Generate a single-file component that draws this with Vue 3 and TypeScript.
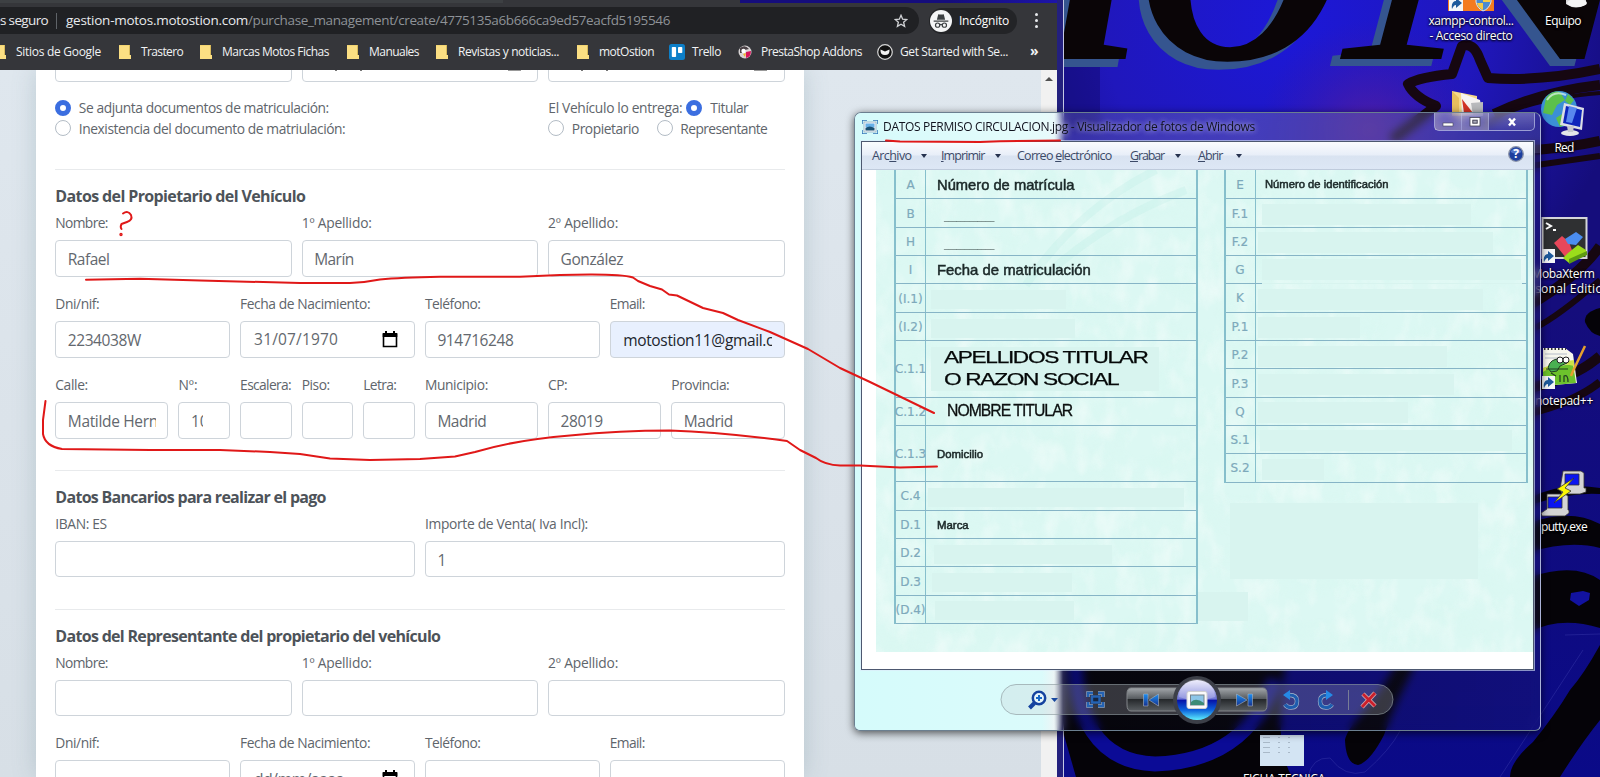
<script setup lang="ts">
interface Field { label: string; lw: number; span: number; value?: string; vw?: number; kind?: 'date' | 'auto' }
interface DocRow { code: string; h: number; text?: string; tw?: number; cls?: string; blob?: [number, number] }

/* Adjusts tracking (or horizontal scale with .scale) so a label takes the given width. */
const vFit = {
  mounted(el: HTMLElement, binding: { value?: number; modifiers: Record<string, boolean> }) {
    if (!binding.value) return
    const width = el.offsetWidth
    const count = (el.textContent || '').trim().length
    if (!width || !count) return
    if (binding.modifiers.scale) el.style.transform = `scaleX(${binding.value / width})`
    else el.style.letterSpacing = `${(binding.value - el.getBoundingClientRect().width) / count}px`
  },
}

const bookmarks = [
  { text: 'Sitios de Google', w: 85, icon: 'folder' },
  { text: 'Trastero', w: 42, icon: 'folder' },
  { text: 'Marcas Motos Fichas', w: 107, icon: 'folder' },
  { text: 'Manuales', w: 50, icon: 'folder' },
  { text: 'Revistas y noticias...', w: 101, icon: 'folder' },
  { text: 'motOstion', w: 55, icon: 'folder' },
  { text: 'Trello', w: 29, icon: 'trello' },
  { text: 'PrestaShop Addons', w: 101, icon: 'presta' },
  { text: 'Get Started with Se...', w: 108, icon: 'sendy' },
]

const names: Field[] = [
  { label: 'Nombre:', lw: 52.5, span: 4, value: 'Rafael', vw: 41.5 },
  { label: '1º Apellido:', lw: 70, span: 4, value: 'Marín', vw: 39.5 },
  { label: '2º Apellido:', lw: 70, span: 4, value: 'González', vw: 62.5 },
]
const contact: Field[] = [
  { label: 'Dni/nif:', lw: 44, span: 3, value: '2234038W', vw: 73 },
  { label: 'Fecha de Nacimiento:', lw: 130, span: 3, value: '31/07/1970', vw: 84, kind: 'date' },
  { label: 'Teléfono:', lw: 55.5, span: 3, value: '914716248', vw: 76 },
  { label: 'Email:', lw: 35, span: 3, value: 'motostion11@gmail.c', vw: 150, kind: 'auto' },
]
const address: Field[] = [
  { label: 'Calle:', lw: 32.5, span: 2, value: 'Matilde Hern', vw: 90 },
  { label: 'Nº:', lw: 19, span: 1, value: '10', vw: 17.5 },
  { label: 'Escalera:', lw: 51, span: 1 },
  { label: 'Piso:', lw: 28, span: 1 },
  { label: 'Letra:', lw: 33, span: 1 },
  { label: 'Municipio:', lw: 63, span: 2, value: 'Madrid', vw: 49 },
  { label: 'CP:', lw: 19, span: 2, value: '28019', vw: 42 },
  { label: 'Provincia:', lw: 58, span: 2, value: 'Madrid', vw: 49 },
]
const bank: Field[] = [
  { label: 'IBAN: ES', lw: 51.5, span: 6 },
  { label: 'Importe de Venta( Iva Incl):', lw: 163, span: 6, value: '1', vw: 8.5 },
]
const empty = (list: Field[]): Field[] =>
  list.map(f => ({ ...f, value: f.kind === 'date' ? 'dd/mm/aaaa' : undefined, vw: f.kind === 'date' ? 90 : undefined, kind: f.kind === 'date' ? 'date' : undefined }))

const sections = [
  { title: 'Datos del Propietario del Vehículo', w: 250, rows: [names, contact, address] },
  { title: 'Datos Bancarios para realizar el pago', w: 270.5, rows: [bank] },
  { title: 'Datos del Representante del propietario del vehículo', w: 385, rows: [empty(names), empty(contact)] },
]

const leftRows: DocRow[] = [
  { code: 'A', h: 29.3, text: 'Número de matrícula', tw: 137, cls: 'big' },
  { code: 'B', h: 28.4, text: '____________', tw: 50, cls: 'dash' },
  { code: 'H', h: 28.4, text: '____________', tw: 50, cls: 'dash' },
  { code: 'I', h: 28.2, text: 'Fecha de matriculación', tw: 154, cls: 'big' },
  { code: '(I.1)', h: 28.6, blob: [5, 135] },
  { code: '(I.2)', h: 28.2, blob: [5, 144] },
  { code: 'C.1.1', h: 56.3, blob: [5, 228], cls: 'owner' },
  { code: 'C.1.2', h: 28.3, text: 'NOMBRE TITULAR', tw: 125, cls: 'name' },
  { code: 'C.1.3', h: 56.1, text: 'Domicilio', tw: 46.5, cls: 'small' },
  { code: 'C.4', h: 28.9, blob: [2, 256] },
  { code: 'D.1', h: 28.3, text: 'Marca', tw: 31.5, cls: 'small marca' },
  { code: 'D.2', h: 28.3, blob: [8, 178] },
  { code: 'D.3', h: 28.5, blob: [6, 140] },
  { code: '(D.4)', h: 28, blob: [9, 139] },
]
const rightRows: DocRow[] = [
  { code: 'E', h: 29.2, text: 'Número de identificación', tw: 124, cls: 'ident' },
  { code: 'F.1', h: 28.3, blob: [6, 209] },
  { code: 'F.2', h: 28.3, blob: [2, 235] },
  { code: 'G', h: 28.3, blob: [6, 259], cls: 'broken' },
  { code: 'K', h: 28.3, blob: [2, 225] },
  { code: 'P.1', h: 28.3, blob: [2, 102] },
  { code: 'P.2', h: 28.5, blob: [2, 189] },
  { code: 'P.3', h: 28.3, blob: [2, 196] },
  { code: 'Q', h: 28.4, blob: [2, 150] },
  { code: 'S.1', h: 27.6, blob: [4, 252] },
  { code: 'S.2', h: 29, blob: [6, 62] },
]
const menu = [
  { pre: 'Arc', key: 'h', post: 'ivo', w: 39.5, arrow: true },
  { pre: '', key: 'I', post: 'mprimir', w: 43.5, arrow: true },
  { pre: 'Correo ', key: 'e', post: 'lectrónico', w: 94.5, arrow: false },
  { pre: '', key: 'G', post: 'rabar', w: 34, arrow: true },
  { pre: '', key: 'A', post: 'brir', w: 24.5, arrow: true },
]
</script>

<template>
  <div class="screen">
    <svg class="wallpaper" viewBox="0 0 1600 777" width="1600" height="777">
      <defs>
        <radialGradient id="glow" gradientUnits="userSpaceOnUse" cx="1290" cy="20" r="340">
          <stop offset="0" stop-color="#1c18d8" />
          <stop offset=".55" stop-color="#2017bc" />
          <stop offset="1" stop-color="#150d7c" />
        </radialGradient>
        <radialGradient id="purple" gradientUnits="userSpaceOnUse" cx="1370" cy="130" r="110">
          <stop offset="0" stop-color="#64209a" stop-opacity=".7" />
          <stop offset="1" stop-color="#40189a" stop-opacity="0" />
        </radialGradient>
        <linearGradient id="low" x1="0" y1="0" x2="0" y2="1">
          <stop offset="0" stop-color="#0a0a80" stop-opacity="0" />
          <stop offset="1" stop-color="#0a0a88" />
        </linearGradient>
      </defs>
      <rect width="1600" height="777" fill="url(#glow)" />
      <rect width="1600" height="300" fill="url(#purple)" />
      <rect x="1050" y="300" width="550" height="477" fill="url(#low)" />
      <rect x="1040" y="40" width="60" height="90" fill="#0d0650" opacity=".35" />
      <g class="letters">
        <g fill="#35558f">
          <text x="1030" y="67">I</text><text x="1128" y="67">O</text>
          <text transform="translate(1334 66) scale(1.5 1)">N</text>
        </g>
        <g fill="#0a0507">
          <text x="1038" y="59">I</text><text x="1137" y="59">O</text>
          <text transform="translate(1344 59) scale(1.5 1)">N</text>
        </g>
      </g>
      <g fill="none" stroke="#160711" stroke-width="10" stroke-linejoin="round">
        <path d="M1392 140 L1436 106 Q1414 97 1408 84 Q1420 77 1452 74 L1462 46 Q1474 42 1480 60 L1488 78 Q1540 82 1600 69" />
        <path d="M1494 114 Q1540 92 1600 85" />
        <path d="M1485 125 Q1520 100 1600 93" stroke-width="4" />
        <path d="M1500 152 Q1560 150 1600 141" />
        <path d="M1530 166 L1600 156" stroke-width="6" />
        <path d="M1530 305 Q1580 275 1600 246" />
        <path d="M1535 328 Q1560 315 1600 280" stroke-width="6" />
        <path d="M1530 388 Q1575 378 1600 356" />
        <path d="M1530 413 Q1575 402 1600 382" stroke-width="8" />
      </g>
      <g fill="#050308">
        <path d="M1600 308 Q1584 312 1585 322 Q1590 334 1600 336z" />
        <path d="M1530 498 Q1560 482 1600 488 V494 Q1570 492 1530 505z" />
        <path d="M1530 523 Q1570 508 1600 524 V548 Q1570 540 1530 552z" />
        <path d="M1530 577 Q1575 562 1600 580 V628 Q1560 616 1530 632z" />
        <path d="M1600 645 Q1584 674 1570 690 Q1555 715 1533 742 Q1510 762 1510 777 H1560 Q1580 745 1600 720z" />
        <path d="M1063 640 H1290 Q1270 740 1292 777 H1063z" />
        <path d="M1405 640 C1385 700 1352 715 1345 740 Q1346 764 1358 765 Q1370 762 1384 735 C1398 695 1415 670 1425 640z" />
      </g>
      <path d="M1583 591l7 2-1 7-10 6-9-6 1-7z" fill="#1212a0" />
      <path d="M1076 640 C1070 720 1100 762 1155 764 C1215 762 1255 735 1275 680" fill="none" stroke="#0b0b96" stroke-width="15" />
      <path d="M1064 735L1076 777H1064z" fill="#0d0d8c" />
      <path d="M1308 777 Q1312 757 1330 758 Q1345 778 1365 772 Q1390 750 1400 731 M1565 635 L1600 634 M1500 777 L1583 650" fill="none" stroke="#3535a8" opacity=".5" />
    </svg>

    <!-- desktop shortcuts -->
    <div class="desk">
      <svg class="ico" viewBox="0 0 160 777" width="160" height="777">
        <rect x="8" y="-20" width="46" height="31" fill="#f47b20" />
        <rect x="9" y="-6" width="14" height="17" fill="#f4f6f8" />
        <path d="M12 9c-1-5 1-8 4-8v-3l6 5-6 5V5c-2 0-3 2-4 4z" fill="#1d5a9c" />
        <path d="M36-4h15V2q-2 7-8 9-6-3-7-9z" fill="#4b8ad0" stroke="#dfe8ee" />
        <path d="M43-4h7V2h-7zM37 3h6v7q-5-2-6-7z" fill="#f5ca45" />
        <path d="M126-4h20v8q-10 7-20 0z" fill="#d9d9dc" /><ellipse cx="137" cy="3" rx="10" ry="4" fill="#f4f4f5" />
        <path d="M12 91l25 5v20H12z" fill="#f6d98a" /><path d="M12 91l7 7v18h-7z" fill="#e8bf5e" />
        <path d="M21 93l19 7 3 16H22z" fill="#f5f3f2" /><path d="M22 99l11 14h-9z" fill="#d33324" /><path d="M31 103l12-1v13H33z" fill="#b9babd" />
        <circle cx="119" cy="109" r="18" fill="#3b8fd6" />
        <path d="M106 98q6-8 14-6l5 8-8 5-5 10-9-2zM122 114l9 3-2 6-9 4-4-9zM128 94l6 6-4 5-5-4z" fill="#5cc04a" />
        <path d="M107 100q7-10 19-5" fill="none" stroke="#e2f6f0" stroke-width="2" opacity=".7" />
        <path d="M124 103l20 5-2 22-22-5z" fill="#dcdfe4" /><path d="M126 106l16 4-2 17-17-4z" fill="#0d24bb" /><path d="M129 106l8 2-5 15-6-1z" fill="#5887ee" />
        <ellipse cx="130" cy="133" rx="9" ry="3" fill="#e4e6e9" /><path d="M127 126h7l-1 6h-5z" fill="#c5c8cf" />
        <rect x="102.500" y="218" width="44" height="40" fill="#2f3032" stroke="#d5d6da" stroke-width="2" />
        <path d="M106 223l5 3-5 3M113 230h3" fill="none" stroke="#fff" stroke-width="2" />
        <path d="M114 243l8-7 7 6 4 11-6 6z" fill="#e8475a" /><path d="M125 239l11-7 7 5-7 8-8-1z" fill="#4b8df0" /><path d="M128 253l10-8 8 5 0 5-17 8-6-5z" fill="#9bdc1b" /><path d="M129 259l18-8v4l-18 9z" fill="#5d9a12" />
        <rect x="102" y="249" width="13" height="14" fill="#f4f6f8" /><path d="M104 262c-1-5 1-8 4-8v-3l6 5-6 5v-3c-2 0-3 2-4 4z" fill="#1d5a9c" />
        <path d="M103 348h22l8 6 4 29-34 3z" fill="#f7f7ee" /><path d="M103 368l30-4 3 19-33 3z" fill="#6cc22c" /><path d="M103 372q16-11 31-6v-6q-18 2-31 8z" fill="#cfe24a" />
        <path d="M104 349h22" stroke="#333" stroke-width="2" stroke-dasharray="1.500 2" /><path d="M105 354h22M105 358h24" stroke="#b5bcc9" />
        <path d="M108 368q2-10 13-9l6 4-7 3-3 5-6 1z" fill="#49b052" stroke="#213b22" />
        <path d="M106 369h22M111 373l5 3M120 375v7M124 382v-6q4-2 4 6" fill="none" stroke="#213b22" stroke-width="1.200" />
        <circle cx="120" cy="360" r="3" fill="#fff" stroke="#222" /><circle cx="126" cy="360" r="3" fill="#fff" stroke="#222" />
        <path d="M145 346l-12 25-2 5" stroke="#e5a02e" stroke-width="2.500" fill="none" />
        <rect x="102" y="376" width="13" height="13" fill="#f4f6f8" /><path d="M104 388c-1-5 1-8 4-8v-3l6 5-6 5v-3c-2 0-3 2-4 4z" fill="#1d5a9c" />
        <g stroke="#333" stroke-width=".8">
          <path d="M123 471h18l3 2v15h2v4l-6 2h-18l-2-5z" fill="#d4d4d4" /><path d="M125 474h14v11h-14z" fill="#0b15f0" />
          <path d="M107 494h18l3 2v14h1v3l-4 3h-23l-1-3 6-4z" fill="#d4d4d4" /><path d="M108 497h14v11h-14z" fill="#0b15f0" />
          <path d="M134 478l-17 11 6 3-9 11 17-12-6-3z" fill="#fbf705" />
        </g>
      </svg>
      <span class="dt two xampp"><span v-fit="85">xampp-control...</span><br /><span v-fit="83">- Acceso directo</span></span>
      <span class="dt equipo"><span v-fit="36">Equipo</span></span>
      <span class="dt red"><span v-fit="19">Red</span></span>
      <span class="dt two moba"><span v-fit="63">MobaXterm</span><br /><span v-fit="95">Personal Edition</span></span>
      <span class="dt npp"><span v-fit="58">notepad++</span></span>
      <span class="dt putty"><span v-fit="46">putty.exe</span></span>
      <span class="dt ficha"><span v-fit="82">FICHA TECNICA</span></span>
      <div class="thumb"><i></i><i></i><i></i></div>
    </div>

    <!-- browser -->
    <div class="browser">
      <div class="tabs"></div>
      <div class="bar">
        <div class="omni">
          <span class="sec"><span v-fit="55">es seguro</span></span><i class="sep"></i>
          <span class="host" v-fit="182">gestion-motos.motostion.com</span><span class="path" v-fit="422">/purchase_management/create/4775135a6b666ca9ed57eacfd5195546</span>
          <svg class="star" viewBox="0 0 16 16" width="14" height="14"><path d="M8 1.500l1.900 4.400 4.700.4-3.600 3.100 1.100 4.700L8 11.600l-4.100 2.500L5 9.400 1.400 6.300l4.700-.4z" fill="none" stroke="#d0d2d5" stroke-width="1.500" /></svg>
        </div>
        <div class="incog">
          <svg viewBox="0 0 24 24" width="22" height="22"><circle cx="12" cy="12" r="12" fill="#f4f5f6" /><path d="M7.500 10.500l1.500-6q3 1 6 0l1.500 6zM4 11.500h16v1.200H4z" fill="#3c4043" /><g fill="none" stroke="#3c4043" stroke-width="1.300"><circle cx="8.300" cy="16.500" r="2.300" /><circle cx="15.700" cy="16.500" r="2.300" /><path d="M10.600 16.300q1.400-1 2.800 0" /></g></svg>
          <span v-fit="50">Incógnito</span>
        </div>
        <div class="dots"><i></i><i></i><i></i></div>
      </div>
      <div class="marks">
        <div v-for="b in bookmarks" :key="b.text" class="mark" :class="b.icon">
          <svg v-if="b.icon === 'folder'" viewBox="0 0 12 14" width="12" height="14"><path d="M0 0h10.500v10H12v4H0z" fill="#fbdf83" /><path d="M0 0h10.500v10" fill="none" stroke="#e9c75c" stroke-width=".8" /></svg>
          <svg v-else-if="b.icon === 'trello'" viewBox="0 0 16 16" width="16" height="16"><rect width="16" height="16" rx="2.500" fill="#0d7fc8" /><rect x="2.800" y="3" width="4.300" height="10" rx=".8" fill="#fff" /><rect x="9" y="3" width="4.300" height="6" rx=".8" fill="#fff" /></svg>
          <svg v-else-if="b.icon === 'presta'" viewBox="0 0 14 14" width="14" height="14"><circle cx="7" cy="7" r="6.500" fill="#d8d4d5" /><path d="M2 3q5-4 9 1L7 5 4 8 2 8z" fill="#4a4145" /><circle cx="5.500" cy="6" r="2.200" fill="#fff" /><path d="M8 7l5-1q0 6-5 7z" fill="#d7175c" /><path d="M5 9l3-1-1 4z" fill="#f2b22c" /></svg>
          <svg v-else viewBox="0 0 16 16" width="16" height="16"><circle cx="8" cy="8" r="7.300" fill="#111" stroke="#d8d8d8" stroke-width="1.200" /><path d="M3.500 5.500l4.500 2 4.500-2q.5 5.500-4.500 5.500T3.500 5.500z" fill="#f2f2f2" /></svg>
          <span v-fit="b.w">{{ b.text }}</span>
        </div>
        <b class="more">»</b>
      </div>

      <div class="page">
        <div class="card">
          <div class="grid cut">
            <div class="input"></div><div class="input d"><i></i><i></i><u></u></div><div class="input d"><i></i><i></i><u></u></div>
          </div>
          <div class="radios">
            <div class="col">
              <p><i class="radio on"></i><span v-fit="250">Se adjunta documentos de matriculación:</span></p>
              <p><i class="radio"></i><span v-fit="266.500">Inexistencia del documento de matriulación:</span></p>
            </div>
            <div class="col right">
              <p><span v-fit="134">El Vehículo lo entrega:</span><i class="radio on near"></i><span v-fit="38">Titular</span></p>
              <p><i class="radio"></i><span class="prop"><span v-fit="67">Propietario</span></span><i class="radio"></i><span v-fit="87">Representante</span></p>
            </div>
          </div>
          <section v-for="s in sections" :key="s.title">
            <hr />
            <h2><span v-fit="s.w">{{ s.title }}</span></h2>
            <div v-for="(row, i) in s.rows" :key="i" class="row">
              <div v-for="(f, j) in row" :key="j" class="field" :class="'s' + f.span">
                <label><span v-fit="f.lw">{{ f.label }}</span></label>
                <div class="input" :class="f.kind">
                  <div class="clip"><span v-if="f.value" v-fit="f.vw">{{ f.value }}</span></div>
                  <svg v-if="f.kind === 'date'" viewBox="0 0 16 17" width="16" height="17"><path d="M1.500 3.500h13v12h-13z" fill="none" stroke="#000" stroke-width="1.600" /><path d="M.7 2h14.600v4H.7zM3 0h2v3H3zM11 0h2v3h-2z" /></svg>
                </div>
              </div>
            </div>
          </section>
        </div>
        <div class="scroll"><i></i></div>
      </div>
    </div>
    <div class="frame"></div>

    <!-- photo viewer -->
    <div class="viewer">
      <div class="tint"></div>
      <div class="title">
        <svg viewBox="0 0 16 14" width="16" height="14"><path d="M0 4V0h5M11 0h5v4M16 10v4h-5M5 14H0v-4" fill="none" stroke="#3274b8" stroke-width="1.500" /><rect x="2" y="2" width="12" height="10" fill="#f3f7fa" stroke="#8ba2b8" stroke-width=".7" /><path d="M3.500 3.500h9v4h-9z" fill="#67b0e8" /><path d="M3.500 8q4-3 9 0v2.500h-9z" fill="#1a5072" /></svg>
        <span v-fit="372">DATOS PERMISO CIRCULACION.jpg - Visualizador de fotos de Windows</span>
        <div class="controls">
          <i><svg viewBox="0 0 12 12" width="12" height="12"><rect x="1" y="7" width="10" height="3" fill="#fff" stroke="#445" stroke-width=".6" /></svg></i>
          <i><svg viewBox="0 0 12 12" width="12" height="12"><rect x="1" y="1.500" width="10" height="8.500" fill="#fff" stroke="#445" stroke-width=".8" /><rect x="3.800" y="4.200" width="4.400" height="3" fill="#aab" stroke="#445" /></svg></i>
          <i><svg viewBox="0 0 12 12" width="12" height="12"><path d="M3 2.500l6 7M9 2.500l-6 7" stroke="#fff" stroke-width="2.400" /></svg></i>
        </div>
      </div>
      <div class="inner">
        <div class="menubar">
          <div v-for="m in menu" :key="m.key" class="mi"><span v-fit="m.w">{{ m.pre }}<u>{{ m.key }}</u>{{ m.post }}</span><b v-if="m.arrow"></b></div>
          <svg class="help" viewBox="0 0 16 16" width="16" height="16"><circle cx="8" cy="8" r="7.300" fill="#1d3f9e" stroke="#8a93a8" stroke-width="1.300" /><path d="M2.500 6a6 6 0 0 1 11 0q-5 3-11 0z" fill="#6a8fdc" opacity=".7" /><text x="8" y="12.300" text-anchor="middle" fill="#fff" font-size="12" font-weight="700" font-family="Open Sans, sans-serif">?</text></svg>
        </div>
        <div class="doc">
          <svg class="texture" viewBox="0 0 658 482" width="658" height="482">
            <defs>
              <filter id="soft" x="0" y="0" width="100%" height="100%"><feTurbulence type="fractalNoise" baseFrequency=".02 .04" numOctaves="4" seed="4" /><feColorMatrix values="0 0 0 0 .68  0 0 0 0 .93  0 0 0 0 .87  2.200 0 0 0 -.9" /></filter>
              <filter id="pale" x="0" y="0" width="100%" height="100%"><feTurbulence type="fractalNoise" baseFrequency=".05 .03" numOctaves="3" seed="9" /><feColorMatrix values="0 0 0 0 .95  0 0 0 0 .99  0 0 0 0 .98  0 2.500 0 0 -1.100" /></filter>
            </defs>
            <rect width="658" height="482" fill="#dcf8f3" />
            <rect width="658" height="482" filter="url(#soft)" opacity=".45" />
            <rect width="658" height="482" filter="url(#pale)" opacity=".45" />
            <path d="M150 115 Q200 40 280 0M170 105Q230 50 310 20" fill="none" stroke="#b9ede3" stroke-width="8" opacity=".25" />
          </svg>
          <div class="sheet">
            <div class="table left">
              <div v-for="r in leftRows" :key="r.code" class="tr" :class="r.cls" :style="{ height: r.h + 'px' }">
                <div class="code"><span>{{ r.code }}</span></div>
                <div class="cell">
                  <div v-if="r.blob" class="blob" :style="{ marginLeft: r.blob[0] + 'px', width: r.blob[1] + 'px' }">
                    <template v-if="r.code === 'C.1.1'"><span v-fit.scale="204">APELLIDOS TITULAR</span><br /><span v-fit.scale="175">O RAZON SOCIAL</span></template>
                  </div>
                  <span v-else class="txt" v-fit.scale="r.tw">{{ r.text }}</span>
                </div>
              </div>
            </div>
            <div class="side">
              <div class="table">
                <div v-for="r in rightRows" :key="r.code" class="tr" :class="r.cls" :style="{ height: r.h + 'px' }">
                  <div class="code"><span>{{ r.code }}</span></div>
                  <div class="cell">
                    <div v-if="r.blob" class="blob" :style="{ marginLeft: r.blob[0] + 'px', width: r.blob[1] + 'px' }"></div>
                    <span v-else class="txt" v-fit.scale="r.tw">{{ r.text }}</span>
                  </div>
                </div>
              </div>
              <div class="patch"></div>
            </div>
          </div>
          <div class="patch2"></div>
        </div>
      </div>
      <div class="tools">
        <svg viewBox="0 0 400 50" width="400" height="50">
          <defs>
            <linearGradient id="btn" x1="0" y1="0" x2="0" y2="1"><stop offset="0" stop-color="#a3a7ab" /><stop offset=".48" stop-color="#54585c" /><stop offset=".5" stop-color="#26292c" /><stop offset="1" stop-color="#5a5e62" /></linearGradient>
            <linearGradient id="orb" x1="0" y1="0" x2="0" y2="1"><stop offset="0" stop-color="#e9e8fb" /><stop offset=".48" stop-color="#6c72d4" /><stop offset=".5" stop-color="#0610a8" /><stop offset=".75" stop-color="#0c62dc" /><stop offset="1" stop-color="#5ff0ff" /></linearGradient>
            <linearGradient id="blu" x1="0" y1="0" x2="0" y2="1"><stop offset="0" stop-color="#1c8ff2" /><stop offset="1" stop-color="#16328f" /></linearGradient>
          </defs>
          <rect x="1" y="9.500" width="392" height="30" rx="15" fill="#c4c9cd" fill-opacity=".25" stroke="#8e999e" stroke-opacity=".65" />
          <g fill="none" stroke="#15439f" stroke-width="2.500"><circle cx="39" cy="23" r="6.200" fill="#e6f5fb" /><path d="M34.500 28l-5 5" stroke-width="4" /><path d="M36 23h6M39 20v6" stroke="#1767c6" stroke-width="2" /></g>
          <path d="M51 23h7l-3.500 4z" fill="#17479f" />
          <g fill="none" stroke="#a9b3c0" stroke-width="3.400"><path d="M88 22v-4h5M98 18h5v4M103 27v4h-5M93 31h-5v-4" /></g>
          <g fill="none" stroke="#2463b4" stroke-width="2.400"><path d="M88 22v-4h5M98 18h5v4M103 27v4h-5M93 31h-5v-4" /><rect x="92" y="21.500" width="7.500" height="6" fill="#162641" /></g>
          <path d="M131 13h48v23h-48q-4 0-4-6V19q0-6 4-6zM216 13h47q4 0 4 6v11q0 6-4 6h-47z" fill="url(#btn)" stroke="#83878b" />
          <circle cx="197" cy="25" r="24" fill="#3c3f48" /><circle cx="197" cy="25" r="20" fill="url(#orb)" /><path d="M179 22a18 18 0 0 1 36 0q-18 7-36 0z" fill="#fff" opacity=".25" />
          <rect x="187" y="16.500" width="20" height="17" rx="2" fill="#fafafa" stroke="#cfcfcf" /><rect x="190.500" y="20" width="13.500" height="10" fill="#8dc6e8" stroke="#76828a" /><path d="M191 27q5-5 13 1v2h-13z" fill="#3d8b76" />
          <g stroke="#aab4c0" stroke-width=".6" fill="url(#blu)"><path d="M143.500 19h4.500v12h-4.500zM158.500 19v12l-9.500-6zM236.500 19v12l10.500-6zM248 19h4.500v12H248z" /></g>
          <g fill="none" stroke="#a6b6cb" stroke-width="4.400"><path d="M289 20q8 0 8 6 0 6.500-6 6.500-4 0-6-3M328 20q-8 0-8 6 0 6.500 6 6.500 4 0 6-3" /></g>
          <g fill="none" stroke="#1e5cae" stroke-width="3.200"><path d="M289 20q8 0 8 6 0 6.500-6 6.500-4 0-6-3M328 20q-8 0-8 6 0 6.500 6 6.500 4 0 6-3" /></g>
          <path d="M283 20l7-5v10zM333 20l-7-5v10z" fill="#258ae6" />
          <path d="M348.500 15v20" stroke="#787d96" />
          <path d="M363 19l12 12M375 18l-13 14" stroke="#d2a7ac" stroke-width="4.500" /><path d="M363 19l12 12M375 18l-13 14" stroke="#cb1f2b" stroke-width="2.800" />
        </svg>
      </div>
    </div>

    <!-- hand-drawn notes -->
    <svg class="ink" viewBox="0 0 1600 777" width="1600" height="777" fill="none" stroke="#e01818" stroke-width="2" stroke-linecap="round" stroke-linejoin="round">
      <path d="M123 213.500Q128 210 131 215Q133 220 127 222L121.500 224Q120 227 121.500 229" /><circle cx="121" cy="234.500" r=".7" />
      <path d="M86 279.800L140 278.800L200 280.500L300 283H350Q365 282.500 380 279.500Q400 277.500 440 276.800L520 276.800L560 275L590 274.600Q622 274.500 633 277.500L638 281L650 286L662 289.500L669 294.500L677 295.500L703 308L723 313L738 320L770 332L808 349L840 368L870 382L934 413" />
      <path d="M45.500 401L43 420V434Q45 446 62 449L150 450H220L270 452L300 454L330 458.500L370 460L420 459L455 456.500L475 452Q515 440 570 435.500Q620 430.500 670 430.500Q720 432 787 441L800 450L816 458Q825 465 840 465.500H860L900 467.500L937 466.500" />
      <path d="M886 140.500L900 141.500L980 142L1000 141.300L1060 140.500" />
    </svg>
  </div>
</template>

<style>
html, body { margin: 0; overflow: hidden; }
</style>

<style scoped>
.screen { position: relative; width: 1600px; height: 777px; overflow: hidden; font-family: "Open Sans", "Noto Sans", sans-serif; }
.screen span { white-space: nowrap; }
.wallpaper, .ink { position: absolute; left: 0; top: 0; }
.ink { pointer-events: none; }
.letters { font: italic bold 290px "Liberation Serif", serif; }
.desk { position: absolute; left: 1440px; top: 0; width: 160px; height: 777px; }
.ico { position: absolute; left: 0; top: 0; }
.dt { position: absolute; color: #fff; font-size: 12px; line-height: 14.500px; text-align: center; transform: translateX(-50%); text-shadow: 0 1px 2px #000, 0 0 3px #000; }
.dt span { display: inline-block; }
.xampp { left: 31px; top: 14px; }
.equipo { left: 123px; top: 14px; }
.red { left: 124px; top: 141px; }
.moba { left: 123px; top: 267px; }
.npp { left: 124px; top: 394px; }
.putty { left: 124px; top: 520px; }
.ficha { left: -156px; top: 772px; }
.thumb { position: absolute; left: -180px; top: 735px; width: 44px; height: 31px; background: #d3e4f3; display: flex; gap: 8px; box-sizing: border-box; padding: 2px 3px; }
.thumb i { width: 7px; height: 20px; background: repeating-linear-gradient(#a9b9c8 0 1px, transparent 1px 5px); }
.thumb i + i { width: 2px; }

.browser { position: absolute; left: 0; top: 0; width: 1057px; height: 777px; display: flex; flex-direction: column; }
.tabs { height: 7px; background: linear-gradient(90deg, #3d4043 0 503px, #35363a 503px 740px, transparent 740px) 0 0 / 100% 3px no-repeat, linear-gradient(#35363a, #35363a) 0 3px no-repeat; }
.bar { height: 27px; background: #35363a; display: flex; align-items: center; }
.omni { width: 919px; height: 27px; box-sizing: border-box; background: #202124; border-radius: 0 14px 14px 0; display: flex; align-items: center; font-size: 13.500px; line-height: 24px; color: #e8eaed; position: relative; }
.omni span { margin-top: -1px; }
.omni .sec span { margin-top: 0; }
.sec { width: 48px; display: flex; justify-content: flex-end; }
.sep { width: 1px; height: 16px; background: #5f6368; margin: 0 9px 0 8px; }
.path { color: #8e9297; }
.star { margin-left: auto; margin-right: 11px; }
.incog { margin-left: 10px; width: 88px; height: 26px; border-radius: 13px; background: #232427; display: flex; align-items: center; gap: 7px; padding-left: 1px; box-sizing: border-box; color: #fff; font-size: 12px; }
.incog span { margin-top: -1px; }
.dots { margin-left: 17.500px; display: grid; gap: 3px; }
.dots i { width: 3px; height: 3px; border-radius: 50%; background: #e8eaed; }
.marks { height: 36px; background: #35363a; display: grid; grid-template-columns: 119px 81px 147px 89px 141px 92px 69px 139px 151px 29px; align-items: center; color: #f1f3f4; font-size: 12px; overflow: hidden; }
.mark { display: flex; align-items: center; gap: 10px; height: 34px; }
.mark span { margin-top: -2px; }
.mark svg { flex: none; }
.mark:first-child { margin-left: -6px; }
.mark.trello, .mark.sendy { gap: 7px; }
.mark.presta { gap: 9px; }
.more { font-size: 14px; margin: -3px 0 0 2px; line-height: 16px; }

.page { flex: 1; min-height: 0; display: flex; background: linear-gradient(#dfe7ee, #d7dfe6); overflow: hidden; }
.card { margin-left: 36px; width: 768px; box-sizing: border-box; height: 707px; overflow: hidden; background: #fff; padding: 0 19.500px 0 19.300px; box-shadow: 0 0 22px rgba(110, 140, 150, .3); color: #60656b; }
.grid { display: grid; grid-template-columns: repeat(3, 1fr); gap: 10px; }
.input { height: 36.800px; box-sizing: border-box; border: 1px solid #ced4da; border-radius: 4px; background: #fff; padding: 0 11.500px; display: flex; align-items: center; font-size: 15.500px; color: #63686e; }
.cut { height: 11.500px; overflow: hidden; }
.cut .input { height: 17.500px; margin-top: -6px; }
.cut .d { padding-left: 32px; gap: 23px; }
.cut .d i { width: 2px; height: 1px; background: #777; margin-top: -4px; }
.cut .d u { width: 13px; height: 1px; background: #999; margin: -4px 5px 0 auto; }
.radios { display: flex; height: 87.500px; box-sizing: border-box; padding-top: 16.300px; font-size: 13.800px; }
.col { width: 493px; }
.right { width: 236px; }
.col p { margin: 0; height: 20.300px; display: flex; align-items: center; }
.radio { flex: none; width: 16px; height: 16px; box-sizing: border-box; border-radius: 50%; border: 1px solid #b3bcc5; background: #fff; margin-right: 7.500px; }
.radio.on { border: 5px solid #3b6ee0; }
.radio.near { margin-left: 4px; margin-right: 8px; }
.prop { width: 85px; }
hr { margin: 0; border: 0; height: 1px; background: #e8eaec; }
h2 { margin: 14px 0 5px; font-size: 16px; line-height: 24px; height: 24px; font-weight: 700; color: #4d5359; }
section { padding-bottom: 14px; }
.row { display: grid; grid-template-columns: repeat(12, minmax(0, 1fr)); column-gap: 10px; height: 80.900px; }
.field { min-width: 0; }
.s1 { grid-column: span 1; } .s2 { grid-column: span 2; } .s3 { grid-column: span 3; } .s4 { grid-column: span 4; } .s6 { grid-column: span 6; }
.s1 .input { padding-right: 26px; }
label { display: block; height: 20px; line-height: 19.500px; margin-bottom: 7px; font-size: 13.800px; }
.clip { flex: 1; min-width: 0; overflow: hidden; line-height: 30px; padding-top: 2px; height: 32px; box-sizing: border-box; }
.date { padding-right: 16px; padding-left: 13px; }
.date .clip { padding-top: 1px; }
.auto { background: #e8f0fe; color: #20252c; padding-left: 12.500px; }
.scroll { margin-left: auto; width: 16px; background: #f1f1f1; display: flex; justify-content: center; }
.scroll i { width: 0; height: 0; margin-top: 7px; border: 4px solid transparent; border-top: 0; border-bottom: 4px solid #505050; }
.frame { position: absolute; left: 1057px; top: 0; width: 7px; height: 777px; box-sizing: border-box; background: #23207e; border-right: 1px solid #c4c8e4; }

.viewer { position: absolute; left: 854px; top: 112px; width: 687px; height: 619px; box-sizing: border-box; border: 1px solid #6b7f90; border-right-color: #aab2d8; border-radius: 7px 7px 6px 6px; overflow: hidden; box-shadow: 0 2px 8px rgba(0, 0, 0, .65); display: flex; flex-direction: column; align-items: center; backdrop-filter: blur(4px); }
.tint { position: absolute; inset: 0; background: linear-gradient(90deg, #d5fbfb 0, #e6fbfb 190px, #e9f8fa 199px, rgba(120, 120, 180, .3) 210px, rgba(120, 115, 170, .42) 390px, rgba(90, 95, 150, .38) 100%) 0 0 / 100% 40px no-repeat, linear-gradient(90deg, #d5fbfb 0, #dbfbfb 187px, #ecf5f6 199px, rgba(8, 10, 20, .3) 208px, rgba(40, 40, 90, .2) 100%) 0 40px no-repeat; }
.title { position: relative; height: 27px; margin-bottom: 1px; width: 100%; display: flex; align-items: center; padding-left: 7px; box-sizing: border-box; font-size: 12px; color: #10121e; gap: 5px; flex: none; text-shadow: 0 0 5px rgba(255, 255, 255, .6), 0 0 9px rgba(255, 255, 255, .4); }
.title > span { margin-top: -1px; }
.controls { position: absolute; right: 5px; top: 0; display: flex; border: 1px solid rgba(200, 205, 235, .7); border-top: 0; border-radius: 0 0 5px 5px; height: 17px; }
.controls i { width: 26px; display: flex; align-items: center; justify-content: center; background: linear-gradient(rgba(255, 255, 255, .25), rgba(255, 255, 255, .06)); border-right: 1px solid rgba(200, 205, 235, .6); }
.controls i:nth-child(-n+2) { box-shadow: inset 0 -5px 12px rgba(255, 250, 200, .35); }
.controls i:last-child { width: 45px; border: 0; }
.inner { position: relative; width: 673px; height: 529px; box-sizing: border-box; border: 1px solid #4d5870; background: #fff; flex: none; box-shadow: 0 0 0 1px rgba(220, 235, 250, .6); }
.menubar { height: 28px; background: linear-gradient(#fafcfe 0, #e8eef8 48%, #d9e3f1 52%, #dde7f5 100%); border-bottom: 1px solid #bfcbdc; box-sizing: border-box; display: grid; grid-template-columns: 69px 76px 113px 68px 1fr 25px; align-items: center; padding-left: 10px; font-size: 12.500px; color: #3c4a68; }
.mi { display: flex; align-items: center; justify-content: space-between; padding-right: 14px; }
.mi:nth-child(2) { padding-right: 16px; }
.mi:nth-child(4) { padding-right: 17px; }
.mi:nth-child(5) { justify-content: flex-start; gap: 13px; }
.mi b { border: 3.500px solid transparent; border-top: 4px solid #26324e; border-bottom: 0; }
.help { margin-top: -3px; }
.doc { position: relative; margin-left: 14px; height: 483px; overflow: hidden; }
.texture { position: absolute; left: 0; top: 0; }
.sheet { position: relative; display: flex; gap: 25.500px; padding: .2px 0 0 18px; align-items: flex-start; }
.table { width: 304px; box-sizing: border-box; border: 1px solid #86bfcc; border-top: 0; border-left-width: 2px; border-right-width: 2px; border-bottom: 0; }
.tr { display: flex; box-sizing: border-box; border-bottom: 1.500px solid #86b4c6; }
.code { width: 30px; box-sizing: border-box; border-right: 1.500px solid #86bfcc; display: flex; align-items: center; justify-content: center; font: 12px "DejaVu Sans", sans-serif; color: #7da9bb; -webkit-text-stroke: .2px #7da9bb; flex: none; }
.code span { margin-top: 1px; }
.cell { flex: 1; display: flex; align-items: center; min-width: 0; }
.cell span { display: inline-block; transform-origin: left; }
.blob { height: 19px; background: #d8f4ef; flex: none; margin-top: 3px; }
.txt { margin-left: 10.500px; font-family: "Liberation Sans", Arial, sans-serif; color: #1b2828; -webkit-text-stroke: .5px #1b2828; }
.big .txt { font-size: 14.500px; margin-top: 1px; }
.dash .txt { font-size: 8px; margin-left: 18px; margin-top: 8px; -webkit-text-stroke: 0; }
.small .txt { font-size: 10.500px; margin-top: 1px; }
.ident .txt { font-size: 10.500px; margin-left: 9.500px; }
.name .txt { font-size: 16px; letter-spacing: -1px; margin-left: 21px; color: #0c1010; -webkit-text-stroke: .3px #0c1010; }
.owner .blob { height: 44px; padding-left: 13px; box-sizing: border-box; font: 17px/22px "Liberation Sans", Arial, sans-serif; letter-spacing: -1px; color: #050808; -webkit-text-stroke: .25px #050808; margin-top: 1px; }
.broken { border-image: linear-gradient(90deg, #86b4c6 0 37px, #d8f4ef 37px 295px, #86b4c6 295px) 1; border-style: solid; border-width: 0 0 1.500px; }
.broken .blob { height: 27px; margin-top: 0; }
.side .blob { height: 21px; }
.patch { width: 248px; height: 76px; background: #d8f4ef; margin: 20px 0 0 6px; }
.patch2 { position: absolute; left: 322px; top: 422px; width: 50px; height: 29px; background: #d8f4ef; }
.tools { position: relative; width: 400px; height: 50px; margin: 5px 0 0 145px; align-self: flex-start; }
.tools svg { display: block; }
</style>
